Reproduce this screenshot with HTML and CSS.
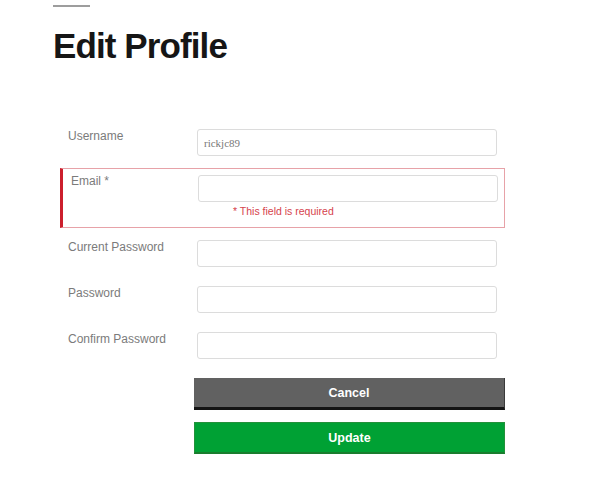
FILE: index.html
```html
<!DOCTYPE html>
<html>
<head>
<meta charset="utf-8">
<title>Edit Profile</title>
<link rel="stylesheet" href="styles.css">
</head>
<body>
<div class="page">
  <div class="rule"></div>
  <h1 class="title">Edit Profile</h1>
  <form class="form">
    <div class="row">
      <label class="label">Username</label>
      <div class="field"><input class="input input-readonly" type="text" value="rickjc89" readonly></div>
    </div>
    <div class="row row-error">
      <label class="label">Email *</label>
      <div class="field">
        <input class="input" type="text">
        <div class="error">* This field is required</div>
      </div>
    </div>
    <div class="row">
      <label class="label">Current Password</label>
      <div class="field"><input class="input" type="password"></div>
    </div>
    <div class="row">
      <label class="label">Password</label>
      <div class="field"><input class="input" type="password"></div>
    </div>
    <div class="row">
      <label class="label">Confirm Password</label>
      <div class="field"><input class="input" type="password"></div>
    </div>
    <div class="actions">
      <button type="button" class="btn btn-cancel">Cancel</button>
      <button type="button" class="btn btn-update">Update</button>
    </div>
  </form>
</div>
</body>
</html>
```
FILE: styles.css
```css
* { box-sizing: border-box; }
html, body { margin: 0; padding: 0; background: #fff; }
body { font-family: "Liberation Sans", Arial, sans-serif; color: #222; }

.page { padding: 5px 0 0 53px; }

.rule { width: 37px; height: 2px; background: #9d9d9d; }

.title {
  margin: 18px 0 0 0;
  font-size: 35px;
  line-height: 42px;
  font-weight: 700;
  letter-spacing: -0.9px;
  color: #161616;
}

.form { margin: 55px 0 0 7px; width: 445px; }

.row {
  display: grid;
  grid-template-columns: 129px 300px;
  align-items: start;
  border: 1px solid transparent;
  padding: 6px 7px 6px 7px;
  margin-bottom: 5px;
}

.row-error {
  grid-template-columns: 127px 300px;
  border-color: #e7a2a8;
  border-left: 3px solid #cc1f2d;
  padding: 6px 6px 9px 8px;
}

.label {
  font-size: 12px;
  line-height: 15px;
  color: #7b7b7b;
}
.row-error .label { margin-top: -1px; }

.field { display: flex; flex-direction: column; }

.input {
  width: 300px;
  height: 27px;
  border: 1px solid #dcdcdc;
  border-radius: 3px;
  background: #fff;
  padding: 0 6px;
  font-family: "Liberation Serif", "Times New Roman", serif;
  font-size: 11px;
  color: #777;
  outline: none;
}

.error {
  margin: 3px 0 0 35px;
  font-size: 10.5px;
  line-height: 13px;
  color: #d6434c;
}

.actions {
  display: flex;
  flex-direction: column;
  gap: 12px;
  margin: 12px 0 0 134px;
  width: 311px;
}

.btn {
  width: 311px;
  height: 32px;
  border: 0;
  padding: 0;
  font-family: "Liberation Sans", Arial, sans-serif;
  font-size: 12.5px;
  font-weight: 700;
  color: #fff;
  cursor: pointer;
}

.btn-cancel {
  background: #616161;
  border-right: 1px solid #3a3a3a;
  border-bottom: 3px solid #141414;
}

.btn-update {
  background: #00a134;
  border: 1px solid #23913a;
  border-bottom: 2px solid #1a7d2e;
}
```
